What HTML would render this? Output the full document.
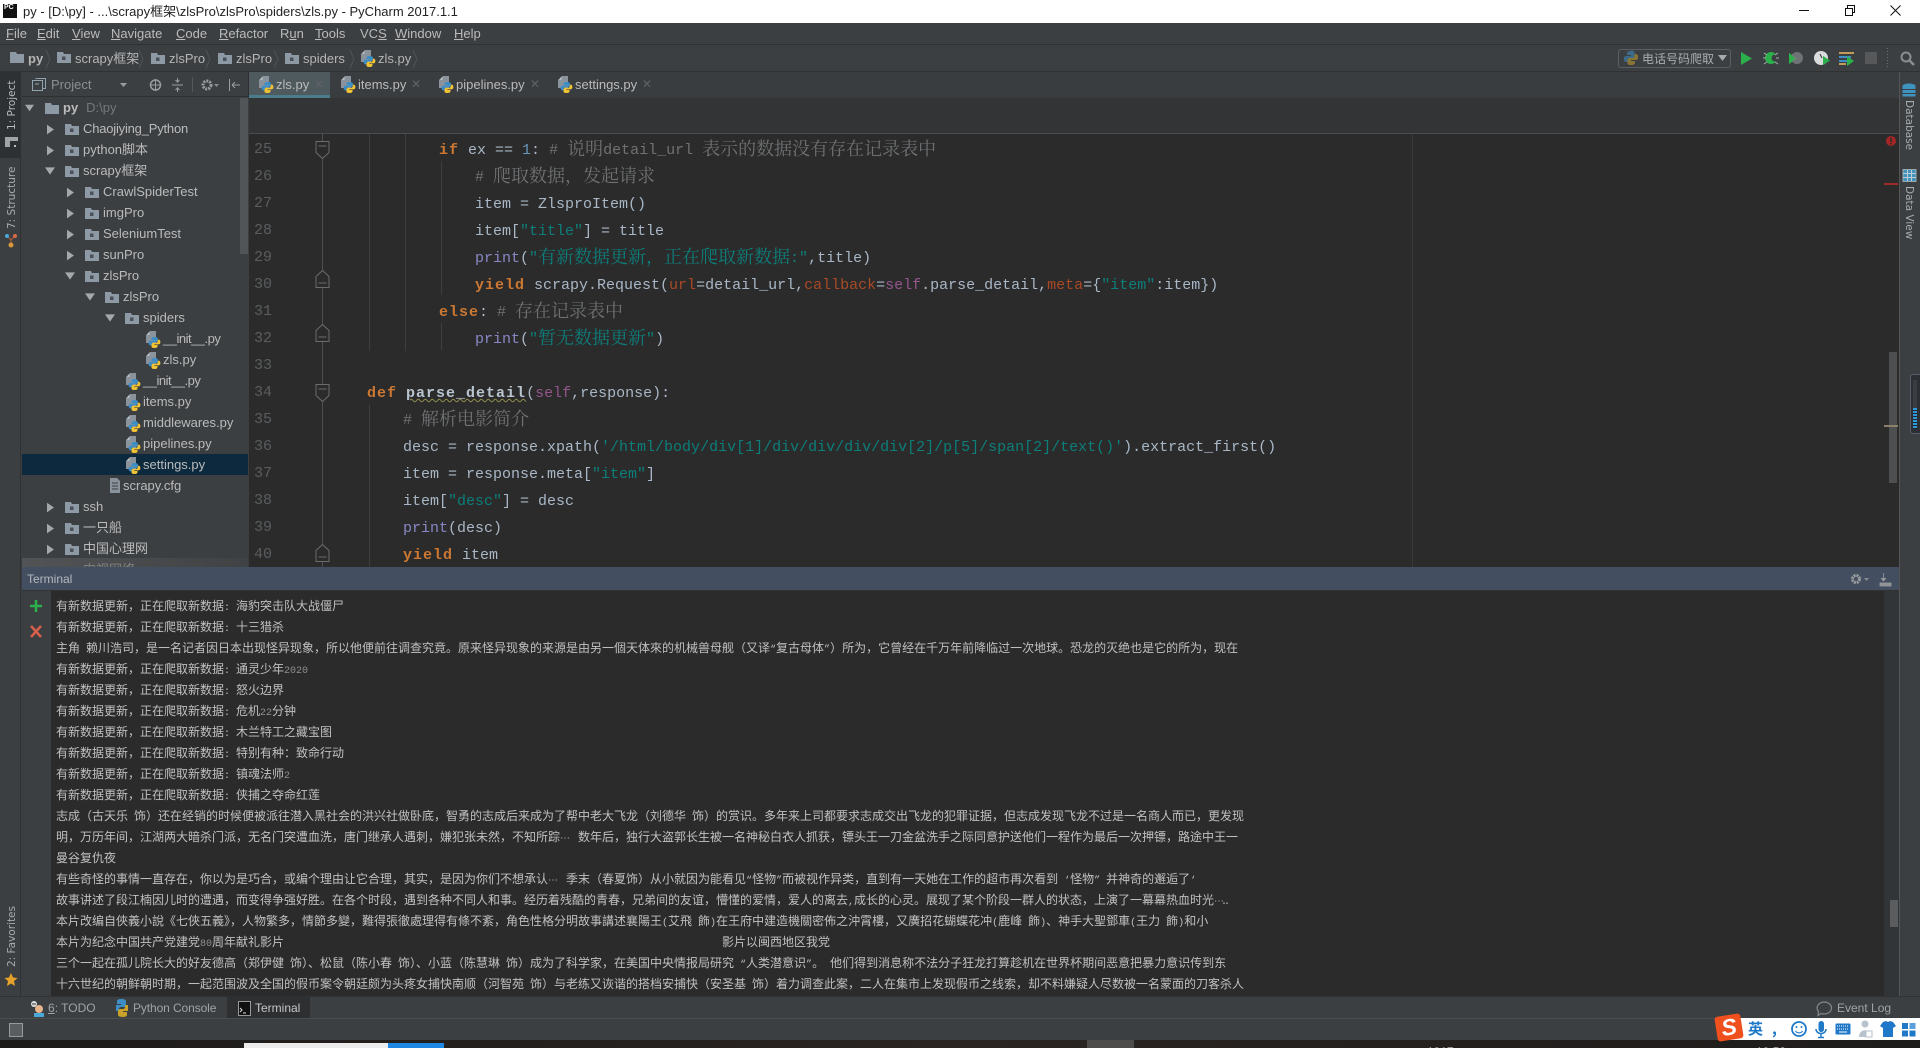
<!DOCTYPE html>
<html lang="zh"><head><meta charset="utf-8"><title>PyCharm</title>
<style>
html,body{margin:0;padding:0;background:#3c3f41;width:1920px;height:1048px;overflow:hidden}
body{position:relative;font-family:"Liberation Sans","Noto Sans CJK SC",sans-serif;font-size:13px;color:#bbb}
.a,.a *{box-sizing:border-box}
.a{position:absolute;white-space:nowrap}
#ov{position:absolute;left:0;top:0;z-index:5;pointer-events:none}
.m{top:23px;height:21px;line-height:22px;color:#bbb;font-size:13px}
.m u{text-decoration:underline}
.n{top:48px;line-height:22px;font-size:13px;color:#b5b5b5}
.tab{top:72px;line-height:25px;font-size:13px;color:#bbb}
.x{top:72px;line-height:24px;font-size:12px;color:#5f6264}
.r{height:21px;line-height:21px;font-size:13px;color:#bbb}
.ln{left:254px;width:24px;height:27px;margin-top:1px;font:15px/27px "Liberation Mono",monospace;color:#5a5d5f}
.c{height:27px;margin-top:2px;margin-left:-1px;font:15px/27px "Liberation Mono","Noto Serif CJK SC",monospace;color:#a9b7c6}
.c .z{font-size:18px;font-family:"Noto Serif CJK SC","Noto Sans CJK SC",serif;line-height:20px;position:relative;top:1px}
.k{color:#cc7832;font-weight:bold;letter-spacing:1px}.d{color:#6f7173}.s{color:#0c7f7b}.p{color:#8888c6}.f{color:#94558d}.q{color:#aa4926}.u{color:#6897bb}
.t{left:56px;height:21px;line-height:21px;font-size:12px;color:#c0c0c0;font-family:"WenQuanYi Zen Hei","Noto Sans CJK SC",sans-serif}
.t b{display:inline-block;width:12px;font:10px "Liberation Mono",monospace;color:#c0c0c0}
.t i{font:10px "Liberation Mono",monospace;color:#8f8f8f}
.t s{text-decoration:none;font:10px "Liberation Mono",monospace;color:#c0c0c0}
.v{font:10.5px/14px "DejaVu Sans",sans-serif;color:#a8adb0;writing-mode:vertical-rl}
.vl{transform:rotate(180deg)}
.g{top:997px;line-height:22px;font-size:12px;color:#a0a3a5}
.sg{top:1018px;height:22px;line-height:22px;color:#1f78c8;font-weight:bold;font-size:15px;font-family:"Noto Sans CJK SC",sans-serif}
</style></head>
<body>
<!-- title bar -->
<div class="a" style="left:0;top:0;width:1920px;height:23px;background:#fff"></div>
<div class="a" style="left:3px;top:4px;width:14px;height:14px;background:#111;color:#fff;font:bold 7px/8px 'Liberation Sans',sans-serif;padding-left:1px">PC</div>
<div class="a" style="left:23px;top:0;line-height:24px;font-size:13px;color:#222">py - [D:\py] - ...\scrapy框架\zlsPro\zlsPro\spiders\zls.py - PyCharm 2017.1.1</div>
<!-- menu -->
<div class="a" style="left:0;top:23px;width:1920px;height:22px;background:#3c3f41;border-bottom:1px solid #2f3132"></div>
<div class="a m" style="left:6px"><u>F</u>ile</div>
<div class="a m" style="left:37px"><u>E</u>dit</div>
<div class="a m" style="left:72px"><u>V</u>iew</div>
<div class="a m" style="left:111px"><u>N</u>avigate</div>
<div class="a m" style="left:176px"><u>C</u>ode</div>
<div class="a m" style="left:219px"><u>R</u>efactor</div>
<div class="a m" style="left:280px">R<u>u</u>n</div>
<div class="a m" style="left:315px"><u>T</u>ools</div>
<div class="a m" style="left:360px">VC<u>S</u></div>
<div class="a m" style="left:395px"><u>W</u>indow</div>
<div class="a m" style="left:454px"><u>H</u>elp</div>
<!-- nav -->
<div class="a" style="left:0;top:45px;width:1920px;height:27px;background:#3c3f41;border-bottom:1px solid #2f3132"></div>
<div class="a n" style="left:28px;font-weight:bold">py</div>
<div class="a n" style="left:75px">scrapy框架</div>
<div class="a n" style="left:169px">zlsPro</div>
<div class="a n" style="left:236px">zlsPro</div>
<div class="a n" style="left:303px">spiders</div>
<div class="a n" style="left:378px">zls.py</div>
<div class="a" style="left:1618px;top:49px;width:113px;height:19px;border:1px solid #5c5f61;border-radius:3px"></div>
<div class="a" style="left:1642px;top:48px;line-height:21px;font-size:12px;color:#a9adb0;font-family:'Noto Sans CJK SC',sans-serif">电话号码爬取</div>
<!-- left bar -->
<div class="a" style="left:0;top:72px;width:21px;height:924px;background:#3c3f41;border-right:1px solid #2f3132"></div>
<div class="a" style="left:0;top:72px;width:21px;height:86px;background:#2e3133"></div>
<div class="a v vl" style="left:5px;top:80px;height:50px;color:#b8bbbd">1: Project</div>
<div class="a v vl" style="left:5px;top:169px;height:60px">7: Structure</div>
<div class="a v vl" style="left:5px;top:907px;height:60px">2: Favorites</div>
<!-- project panel -->
<div class="a" style="left:22px;top:72px;width:226px;height:25px;background:#3c3f41;border-bottom:1px solid #2e3032"></div>
<div class="a" style="left:51px;top:72px;line-height:25px;color:#8c8f91;font-size:13px">Project</div>
<div class="a" id="tree" style="left:22px;top:97px;width:226px;height:470px;background:#3c3f41;overflow:hidden">
<div class="a" style="left:0;top:357px;width:226px;height:21px;background:#0d293e"></div>
<div class="a r" style="left:41px;top:0;font-weight:bold">py<span style="font-weight:normal;color:#75787a;margin-left:8px">D:\py</span></div>
<div class="a r" style="left:61px;top:21px;letter-spacing:-.2px">Chaojiying_Python</div>
<div class="a r" style="left:61px;top:42px">python脚本</div>
<div class="a r" style="left:61px;top:63px">scrapy框架</div>
<div class="a r" style="left:81px;top:84px">CrawlSpiderTest</div>
<div class="a r" style="left:81px;top:105px">imgPro</div>
<div class="a r" style="left:81px;top:126px">SeleniumTest</div>
<div class="a r" style="left:81px;top:147px">sunPro</div>
<div class="a r" style="left:81px;top:168px">zlsPro</div>
<div class="a r" style="left:101px;top:189px">zlsPro</div>
<div class="a r" style="left:121px;top:210px">spiders</div>
<div class="a r" style="left:141px;top:231px;letter-spacing:-.5px">__init__.py</div>
<div class="a r" style="left:141px;top:252px">zls.py</div>
<div class="a r" style="left:121px;top:273px;letter-spacing:-.5px">__init__.py</div>
<div class="a r" style="left:121px;top:294px">items.py</div>
<div class="a r" style="left:121px;top:315px">middlewares.py</div>
<div class="a r" style="left:121px;top:336px">pipelines.py</div>
<div class="a r" style="left:121px;top:357px">settings.py</div>
<div class="a r" style="left:101px;top:378px">scrapy.cfg</div>
<div class="a r" style="left:61px;top:399px">ssh</div>
<div class="a r" style="left:61px;top:420px">一只船</div>
<div class="a r" style="left:61px;top:441px">中国心理网</div>
<div class="a r" style="left:61px;top:462px">中视网络</div>
<div class="a" style="left:0;top:461px;width:226px;height:9px;background:linear-gradient(90deg,rgba(90,92,94,.7),rgba(70,72,74,.4))"></div>
<div class="a" style="left:218px;top:1px;width:8px;height:156px;background:#525557"></div>
</div>
<!-- tabs -->
<div class="a" style="left:248px;top:72px;width:1651px;height:26px;background:#3a3d3f;border-left:1px solid #2e3032"></div>
<div class="a" style="left:249px;top:72px;width:81px;height:26px;background:#4e5a5e;border-bottom:3px solid #4a7c8c"></div>
<div class="a" style="left:249px;top:98px;width:1650px;height:35px;background:#323436"></div>
<div class="a tab" style="left:276px">zls.py</div><div class="a x" style="left:314px">✕</div>
<div class="a tab" style="left:358px">items.py</div><div class="a x" style="left:411px">✕</div>
<div class="a tab" style="left:456px">pipelines.py</div><div class="a x" style="left:530px">✕</div>
<div class="a tab" style="left:575px">settings.py</div><div class="a x" style="left:642px">✕</div>
<!-- editor -->
<div class="a" style="left:249px;top:133px;width:1650px;height:434px;background:#2b2b2b;border-top:1px solid #4a4c4d"></div>
<div class="a" style="left:1412px;top:134px;width:1px;height:433px;background:#3a3a3a"></div>
<div class="a" style="left:1889px;top:352px;width:8px;height:131px;background:#4e4f50"></div>
<div class="a" style="left:1884px;top:183px;width:14px;height:2px;background:#9e2a2a"></div>
<div class="a" style="left:1884px;top:425px;width:14px;height:2px;background:#8a7f68"></div>
<div class="a ln" style="top:135px">25</div><div class="a ln" style="top:162px">26</div><div class="a ln" style="top:189px">27</div><div class="a ln" style="top:216px">28</div><div class="a ln" style="top:243px">29</div><div class="a ln" style="top:270px">30</div><div class="a ln" style="top:297px">31</div><div class="a ln" style="top:324px">32</div><div class="a ln" style="top:351px">33</div><div class="a ln" style="top:378px">34</div><div class="a ln" style="top:405px">35</div><div class="a ln" style="top:432px">36</div><div class="a ln" style="top:459px">37</div><div class="a ln" style="top:486px">38</div><div class="a ln" style="top:513px">39</div><div class="a ln" style="top:540px">40</div>
<div class="a c" style="left:440px;top:135px"><span class="k">if</span> ex == <span class="u">1</span>: <span class="d"># <span class="z">说明</span>detail_url <span class="z">表示的数据没有存在记录表中</span></span></div>
<div class="a c" style="left:476px;top:162px"><span class="d"># <span class="z">爬取数据，发起请求</span></span></div>
<div class="a c" style="left:476px;top:189px">item = ZlsproItem()</div>
<div class="a c" style="left:476px;top:216px">item[<span class="s">"title"</span>] = title</div>
<div class="a c" style="left:476px;top:243px"><span class="p">print</span>(<span class="s">"<span class="z">有新数据更新，正在爬取新数据</span>:"</span>,title)</div>
<div class="a c" style="left:476px;top:270px"><span class="k">yield</span> scrapy.Request(<span class="q">url</span>=detail_url,<span class="q">callback</span>=<span class="f">self</span>.parse_detail,<span class="q">meta</span>={<span class="s">"item"</span>:item})</div>
<div class="a c" style="left:440px;top:297px"><span class="k">else</span>: <span class="d"># <span class="z">存在记录表中</span></span></div>
<div class="a c" style="left:476px;top:324px"><span class="p">print</span>(<span class="s">"<span class="z">暂无数据更新</span>"</span>)</div>
<div class="a c" style="left:368px;top:378px"><span class="k">def</span> <span style="color:#b8c4ce;font-weight:bold;letter-spacing:1px;text-decoration:underline wavy #8f8f4e 1px">parse_detail</span>(<span class="f">self</span>,response):</div>
<div class="a c" style="left:404px;top:405px"><span class="d"># <span class="z">解析电影简介</span></span></div>
<div class="a c" style="left:404px;top:432px">desc = response.xpath(<span class="s">'/html/body/div[1]/div/div/div/div[2]/p[5]/span[2]/text()'</span>).extract_first()</div>
<div class="a c" style="left:404px;top:459px">item = response.meta[<span class="s">"item"</span>]</div>
<div class="a c" style="left:404px;top:486px">item[<span class="s">"desc"</span>] = desc</div>
<div class="a c" style="left:404px;top:513px"><span class="p">print</span>(desc)</div>
<div class="a c" style="left:404px;top:540px"><span class="k">yield</span> item</div>
<!-- terminal -->
<div class="a" style="left:22px;top:567px;width:1877px;height:24px;background:#434e60;border-bottom:1px solid #333"></div>
<div class="a" style="left:27px;top:567px;line-height:24px;font-size:12px;color:#b4b8bd">Terminal</div>
<div class="a" style="left:22px;top:591px;width:29px;height:405px;background:#3c3f41"></div>
<div class="a" style="left:51px;top:591px;width:1833px;height:405px;background:#2b2b2b"></div>
<div class="a" style="left:1884px;top:591px;width:15px;height:405px;background:#323537"></div>
<div class="a" style="left:1890px;top:900px;width:8px;height:27px;background:#5a5c5e"></div>
<div class="a t" style="top:595px">有新数据更新，正在爬取新数据<b>:</b>海豹突击队大战僵尸</div>
<div class="a t" style="top:616px">有新数据更新，正在爬取新数据<b>:</b>十三猎杀</div>
<div class="a t" style="top:637px">主角&ensp;赖川浩司，是一名记者因日本出现怪异现象，所以他便前往调查究竟。原来怪异现象的来源是由另一個天体來的机械兽母舰（又译<s>“</s>复古母体<s>”</s>）所为，它曾经在千万年前降临过一次地球。恐龙的灭绝也是它的所为，现在</div>
<div class="a t" style="top:658px">有新数据更新，正在爬取新数据<b>:</b>通灵少年<i>2020</i></div>
<div class="a t" style="top:679px">有新数据更新，正在爬取新数据<b>:</b>怒火边界</div>
<div class="a t" style="top:700px">有新数据更新，正在爬取新数据<b>:</b>危机<i>22</i>分钟</div>
<div class="a t" style="top:721px">有新数据更新，正在爬取新数据<b>:</b>木兰特工之藏宝图</div>
<div class="a t" style="top:742px">有新数据更新，正在爬取新数据<b>:</b>特别有种：致命行动</div>
<div class="a t" style="top:763px">有新数据更新，正在爬取新数据<b>:</b>镇魂法师<i>2</i></div>
<div class="a t" style="top:784px">有新数据更新，正在爬取新数据<b>:</b>侠捕之夺命红莲</div>
<div class="a t" style="top:805px">志成（古天乐&ensp;饰）还在经销的时候便被派往潜入黑社会的洪兴社做卧底，智勇的志成后来成为了帮中老大飞龙（刘德华&ensp;饰）的赏识。多年来上司都要求志成交出飞龙的犯罪证据，但志成发现飞龙不过是一名商人而已，更发现</div>
<div class="a t" style="top:826px">明，万历年间，江湖两大暗杀门派，无名门突遭血洗，唐门继承人遇刺，嫌犯张未然，不知所踪<b>⋯</b><s> </s>数年后，独行大盗郭长生被一名神秘白衣人抓获，镖头王一刀金盆洗手之际同意护送他们一程作为最后一次押镖，路途中王一</div>
<div class="a t" style="top:847px">曼谷复仇夜</div>
<div class="a t" style="top:868px">有些奇怪的事情一直存在，你以为是巧合，或编个理由让它合理，其实，是因为你们不想承认<b>⋯</b><s> </s>季末（春夏饰）从小就因为能看见<s>“</s>怪物<s>”</s>而被视作异类，直到有一天她在工作的超市再次看到<s> ‘</s>怪物<s>” </s>并神奇的邂逅了<s>‘</s></div>
<div class="a t" style="top:889px">故事讲述了段江楠因儿时的遭遇，而变得争强好胜。在各个时段，遇到各种不同人和事。经历着残酷的青春，兄弟间的友谊，懵懂的爱情，爱人的离去<s>,</s>成长的心灵。展现了某个阶段一群人的状态，上演了一幕幕热血时光<b style="width:7px">⋯</b><b style="width:3px">.</b><b style="width:3px">.</b></div>
<div class="a t" style="top:910px">本片改编自俠義小說《七俠五義》，人物繁多，情節多變，難得張徹處理得有條不紊，角色性格分明故事講述襄陽王<s>(</s>艾飛&ensp;飾<s>)</s>在王府中建造機關密佈之沖霄樓，又廣招花蝴蝶花冲<s>(</s>鹿峰&ensp;飾<s>)</s>、神手大聖鄧車<s>(</s>王力&ensp;飾<s>)</s>和小</div>
<div class="a t" style="top:931px">本片为纪念中国共产党建党<i>80</i>周年献礼影片</div>
<div class="a t" style="top:931px;left:722px">影片以闽西地区我党</div>
<div class="a t" style="top:952px">三个一起在孤儿院长大的好友德高（郑伊健&ensp;饰）、松鼠（陈小春&ensp;饰）、小蓝（陈慧琳&ensp;饰）成为了科学家，在美国中央情报局研究<s> “</s>人类潜意识<s>”</s>。<s> </s>他们得到消息称不法分子狂龙打算趁机在世界杯期间恶意把暴力意识传到东</div>
<div class="a t" style="top:973px">十六世纪的朝鲜朝时期，一起范围波及全国的假币案令朝廷颇为头疼女捕快南顺（河智苑&ensp;饰）与老练又诙谐的搭档安捕快（安圣基&ensp;饰）着力调查此案，二人在集市上发现假币之线索，却不料嫌疑人尽数被一名蒙面的刀客杀人</div>
<!-- right bar -->
<div class="a" style="left:1899px;top:72px;width:21px;height:924px;background:#3c3f41;border-left:1px solid #555"></div>
<div class="a v" style="left:1902px;top:100px">Database</div>
<div class="a v" style="left:1902px;top:186px">Data View</div>
<div class="a" style="left:1910px;top:374px;width:12px;height:60px;background:#2c2f33;border:1px solid #555e66;border-radius:3px 0 0 3px"></div>
<div class="a" style="left:1913px;top:380px;width:4px;height:28px;background:#3a3d42"></div>
<div class="a" style="left:1913px;top:408px;width:4px;height:21px;background:repeating-linear-gradient(#2e9bd6 0 2px,#223 2px 3px)"></div>
<!-- bottom tool tabs -->
<div class="a" style="left:0;top:996px;width:1920px;height:23px;background:#3c3f41;border-top:1px solid #2f3132;border-bottom:1px solid #4a4c4e"></div>
<div class="a" style="left:227px;top:997px;width:83px;height:21px;background:#2d2f30"></div>
<div class="a g" style="left:48px"><u>6</u>: TODO</div>
<div class="a g" style="left:133px;letter-spacing:-.1px">Python Console</div>
<div class="a g" style="left:255px;color:#c5c7c8">Terminal</div>
<div class="a g" style="left:1837px">Event Log</div>
<!-- status -->
<div class="a" style="left:0;top:1019px;width:1920px;height:21px;background:#3c3f41"></div>
<div class="a" style="left:9px;top:1023px;width:14px;height:14px;background:#5b5e60;border:1px solid #999"></div>
<!-- taskbar -->
<div class="a" style="left:0;top:1040px;width:1920px;height:8px;background:linear-gradient(90deg,#1d1b1a,#2a2522 50%,#1e1c1b);overflow:hidden">
<div class="a" style="left:244px;top:3px;width:144px;height:5px;background:#ececec"></div>
<div class="a" style="left:388px;top:3px;width:56px;height:5px;background:#1e88e5"></div>
<div class="a" style="left:1087px;top:0;width:47px;height:8px;background:#4d4c4a"></div>
<div class="a" style="left:1427px;top:5px;font-size:12px;color:#fff">1917</div>
<div class="a" style="left:1756px;top:5px;font-size:12px;color:#fff">10:58</div>
</div>
<!-- sogou bar -->
<div class="a" style="left:1730px;top:1018px;width:190px;height:22px;background:#fff"></div>
<div class="a" style="left:1716px;top:1015px;width:26px;height:25px;background:#f0501e;border-radius:3px;transform:rotate(-9deg);z-index:6;color:#fff;font:italic bold 23px/25px 'Liberation Sans',sans-serif;text-align:center">S</div>
<div class="a sg" style="left:1748px">英</div>
<div class="a sg" style="left:1772px">,</div>

<svg id="ov" width="1920" height="1048" viewBox="0 0 1920 1048" xmlns="http://www.w3.org/2000/svg">
<defs>
<symbol id="pf" viewBox="0 0 14 17" overflow="visible">
<path d="M4 0h6v12H0V4z" fill="#8a939b"/><path d="M3.500 .8v3H.8z" fill="#c2c8cc"/>
<path d="M8.500 6c-2 0-3 .7-3 1.800v1.200h3.200v.6H4.600c-1.200 0-2 1-2 2.400s.8 2.400 2 2.400h1v-1.500c0-1 .9-1.800 2-1.800h2.600c1 0 1.700-.8 1.700-1.700V7.800C11.900 6.700 10.700 6 8.500 6z" fill="#3d8ec6"/>
<path d="M8.500 17c2 0 3-.7 3-1.800V14H8.300v-.6h4.100c1.200 0 2-1 2-2.400s-.8-2.400-2-2.400h-.6v1.500c0 1-.9 1.800-2 1.800H7.200c-1 0-1.700.8-1.700 1.700v1.600C5.500 16.300 6.300 17 8.500 17z" fill="#f2c434"/>
</symbol>
<symbol id="fd" viewBox="0 0 14 11"><path d="M0 0h6l1 2h7v9H0z" fill="#8d99a5"/><rect x="5" y="4.500" width="3.500" height="3.500" fill="#4b5159"/></symbol>
<symbol id="fe" viewBox="0 0 14 11"><path d="M0 0h6l1 2h7v9H0z" fill="#8d99a5"/></symbol>
<symbol id="tr" viewBox="0 0 8 11"><path d="M0 0l8 5.500-8 5.500z" fill="#a4a8ab"/></symbol>
<symbol id="td" viewBox="0 0 11 8"><path d="M0 0h11l-5.500 8z" fill="#a4a8ab"/></symbol>
<symbol id="ft" viewBox="0 0 14 18"><path d="M.5.500h13v11l-6.500 6-6.500-6z" fill="#2b2b2b" stroke="#6a6c6e"/><path d="M3 5h8" stroke="#6a6c6e"/></symbol>
<symbol id="fb" viewBox="0 0 14 18"><path d="M.5 17.500h13v-11l-6.500-6-6.500 6z" fill="#2b2b2b" stroke="#6a6c6e"/><path d="M3 13h8" stroke="#6a6c6e"/></symbol>
</defs>
<!-- nav icons -->
<use href="#fe" x="10" y="52" width="14" height="11"/>
<use href="#fd" x="57" y="52" width="14" height="11"/>
<use href="#fd" x="151" y="53" width="14" height="11"/>
<use href="#fd" x="218" y="53" width="14" height="11"/>
<use href="#fd" x="285" y="53" width="14" height="11"/>
<use href="#pf" x="361" y="50" width="14" height="17"/>
<g fill="none" stroke="#505355"><path d="M46 50l4 9-4 9M139 50l4 9-4 9M206 50l4 9-4 9M274 50l4 9-4 9M350 50l4 9-4 9M413 50l4 9-4 9"/></g>
<!-- run toolbar -->
<g opacity=".55"><path d="M1631 51c-3 0-4 1-4 2.500v1.500h4v1h-5c-1.500 0-2 1-2 3s.6 3 2 3h1.500v-2c0-1.200 1-2 2-2h3c1 0 2-.8 2-2v-3c0-1.500-1-2.500-3.500-2.500z" fill="#3d8ec6"/><path d="M1631 65c3 0 4-1 4-2.500V61h-4v-1h5c1.500 0 2-1 2-3s-.6-3-2-3h-1.500v2c0 1.200-1 2-2 2h-3c-1 0-2 .8-2 2v3c0 1.500 1 2 3.500 2z" fill="#c9a22a"/></g>
<path d="M1718 55h9l-4.500 6z" fill="#a8abad"/>
<path d="M1741 52l11 6.500-11 6.500z" fill="#2cb04b"/>
<g transform="translate(1771,58)"><ellipse rx="6" ry="6" fill="#2cb04b"/><circle cx="4" r="3.500" fill="#3c3f41"/><path d="M-7-5l3 2M7-5l-3 2M-8 0h3M8 0h-3M-7 6l3-2M7 6l-3-2" stroke="#a9adb0"/></g>
<path d="M1789 53l8 5.500-8 5.500z" fill="#2cb04b"/><circle cx="1797" cy="58" r="6" fill="#7c7f81" opacity=".8"/><path d="M1789 53l6 5.500-6 5.500z" fill="#2cb04b"/>
<circle cx="1821" cy="58" r="7" fill="#d9dbdc"/><path d="M1820 54l2 4" stroke="#333"/><path d="M1823 56l7 4.500-7 4.500z" fill="#2cb04b"/>
<g><rect x="1839" y="52" width="15" height="2" fill="#c49a5c"/><rect x="1839" y="56" width="12" height="2" fill="#3f8fc4"/><rect x="1839" y="60" width="8" height="2" fill="#3f8fc4"/><rect x="1839" y="63" width="7" height="2" fill="#c49a5c"/><path d="M1847 56l7 5-7 5z" fill="#2cb04b"/></g>
<rect x="1865" y="52" width="12" height="12" fill="#565859"/>
<path d="M1887.500 48v20" stroke="#6a6c6e" stroke-dasharray="1 2"/>
<circle cx="1906" cy="57" r="4.500" fill="none" stroke="#8a8d8f" stroke-width="2"/><path d="M1909 60l5 5" stroke="#8a8d8f" stroke-width="2.500"/>
<!-- window buttons -->
<path d="M1799 10.500h10" stroke="#111"/>
<path d="M1845.500 8.500h7v7h-7zM1847.500 8V5.500h7v7h-2" fill="none" stroke="#111"/>
<path d="M1890.500 5.500l10 10M1900.500 5.500l-10 10" stroke="#111"/>
<!-- project toolbar -->
<path d="M32.500 80.500h10v10h-10zM35.500 78.500h10v10h-3M35 84h4" fill="none" stroke="#8fa3b0"/>
<path d="M120 83h7l-3.500 4z" fill="#9a9d9f"/>
<circle cx="155.500" cy="85" r="5" fill="none" stroke="#9a9d9f" stroke-width="1.500"/><path d="M155.500 79v12M150 85h11" stroke="#9a9d9f"/>
<path d="M172 85h11M177.500 78v4l-2-2M177.500 82l2-2M177.500 92v-4l-2 2M177.500 88l2 2" fill="none" stroke="#9a9d9f"/>
<path d="M192.500 77v15" stroke="#55585a"/>
<circle cx="207" cy="85" r="4" fill="none" stroke="#9a9d9f" stroke-width="3" stroke-dasharray="2 1"/><path d="M214 84h5l-2.500 3z" fill="#8a8d8f"/>
<path d="M229.500 79v12M232 85h8M232 85l3-3M232 85l3 3" fill="none" stroke="#9a9d9f"/>
<!-- left bar icons -->
<path d="M5 137h13v4h-8v6H5z" fill="#a0a4a7"/><rect x="14" y="145" width="2" height="2" fill="#bbb"/>
<g fill="none" stroke="#b85e3a"><path d="M7 236l4 4M15 236l-4 4M11 240v4"/></g><circle cx="7" cy="236" r="2" fill="#4aa8d8"/><circle cx="15" cy="236" r="2" fill="#d86a4a"/><circle cx="11" cy="245" r="2.500" fill="#d9973a"/>
<path d="M11 973l2 4.500 4.500.5-3.500 3 1 5-4-2.500-4 2.500 1-5-3.500-3 4.500-.5z" fill="#e6a32c"/>
<!-- right bar icons -->
<g fill="#3f93bf"><ellipse cx="1909" cy="86" rx="6.500" ry="2.500"/><rect x="1902.500" y="86" width="13" height="3"/><rect x="1902.500" y="90" width="13" height="3"/><rect x="1902.500" y="94" width="13" height="2.500"/></g>
<rect x="1903" y="169.500" width="13" height="12" fill="#3f93bf" stroke="#9aa" stroke-width="1"/><path d="M1907.500 170v11M1911.500 170v11M1903 173.500h13M1903 177.500h13" stroke="#c3ccd2"/>
<!-- error -->
<circle cx="1891" cy="141" r="5" fill="#a52626"/><rect x="1890.300" y="137.500" width="1.500" height="4.500" fill="#2b2b2b"/><rect x="1890.300" y="143" width="1.500" height="1.500" fill="#2b2b2b"/>
<!-- tabs icons -->
<use href="#pf" x="259" y="76" width="14" height="17"/>
<use href="#pf" x="341" y="76" width="14" height="17"/>
<use href="#pf" x="439" y="76" width="14" height="17"/>
<use href="#pf" x="558" y="76" width="14" height="17"/>
<!-- tree icons -->
<use href="#td" x="25" y="104" width="9" height="8"/>
<use href="#fe" x="45" y="103" width="14" height="11"/>
<use href="#tr" x="47" y="124" width="7" height="11"/><use href="#fd" x="65" y="124" width="14" height="11"/>
<use href="#tr" x="47" y="145" width="7" height="11"/><use href="#fd" x="65" y="145" width="14" height="11"/>
<use href="#td" x="45" y="167" width="10" height="8"/><use href="#fd" x="65" y="166" width="14" height="11"/>
<use href="#tr" x="67" y="187" width="7" height="11"/><use href="#fd" x="85" y="187" width="14" height="11"/>
<use href="#tr" x="67" y="208" width="7" height="11"/><use href="#fd" x="85" y="208" width="14" height="11"/>
<use href="#tr" x="67" y="229" width="7" height="11"/><use href="#fd" x="85" y="229" width="14" height="11"/>
<use href="#tr" x="67" y="250" width="7" height="11"/><use href="#fd" x="85" y="250" width="14" height="11"/>
<use href="#td" x="65" y="272" width="10" height="8"/><use href="#fd" x="85" y="271" width="14" height="11"/>
<use href="#td" x="85" y="293" width="10" height="8"/><use href="#fd" x="105" y="292" width="14" height="11"/>
<use href="#td" x="105" y="314" width="10" height="8"/><use href="#fd" x="125" y="313" width="14" height="11"/>
<use href="#pf" x="146" y="331" width="14" height="17"/>
<use href="#pf" x="146" y="352" width="14" height="17"/>
<use href="#pf" x="126" y="373" width="14" height="17"/>
<use href="#pf" x="126" y="394" width="14" height="17"/>
<use href="#pf" x="126" y="415" width="14" height="17"/>
<use href="#pf" x="126" y="436" width="14" height="17"/>
<use href="#pf" x="126" y="457" width="14" height="17"/>
<path d="M110 478h7l3 3v12h-10z" fill="#8a939b"/><path d="M112 483h6M112 486h6M112 489h6" stroke="#3c3f41"/>
<use href="#tr" x="47" y="502" width="7" height="11"/><use href="#fd" x="65" y="502" width="14" height="11"/>
<use href="#tr" x="47" y="523" width="7" height="11"/><use href="#fd" x="65" y="523" width="14" height="11"/>
<use href="#tr" x="47" y="544" width="7" height="11"/><use href="#fd" x="65" y="544" width="14" height="11"/>
<!-- gutter -->
<path d="M322.500 134v433" stroke="#4d4f51"/>
<g stroke="#3d3f40"><path d="M369.500 134v217M405.500 134v217M441.500 161v134M441.500 323v27M369.500 405v162"/></g>
<use href="#ft" x="315" y="141" width="15" height="18"/>
<use href="#fb" x="315" y="270" width="15" height="18"/>
<use href="#fb" x="315" y="324" width="15" height="18"/>
<use href="#ft" x="315" y="384" width="15" height="18"/>
<use href="#fb" x="315" y="544" width="15" height="18"/>
<!-- terminal -->
<path d="M36 600v12M30 606h12" stroke="#2cb04b" stroke-width="2.500"/>
<path d="M31 626l10 11M41 626l-10 11" stroke="#d8604a" stroke-width="2.500"/>
<circle cx="1856" cy="579" r="3.500" fill="none" stroke="#9a9d9f" stroke-width="3" stroke-dasharray="2 .8"/><path d="M1864 578h5l-2.500 3z" fill="#8a8d8f"/>
<path d="M1883.500 573v7M1881 578l2.500 3 2.500-3M1880 583h11v3h-11z" fill="#8f9294" stroke="#9a9d9f" stroke-width=".8"/>
<!-- bottom tab icons -->
<circle cx="39" cy="1009" r="4" fill="#e8b48c"/><rect x="34" y="1013" width="10" height="4" fill="#4aa8d8"/><circle cx="34" cy="1004" r="3" fill="#ddd"/><rect x="32" y="1003.500" width="4" height="1" fill="#333"/>
<path d="M121 999c-3 0-4 1-4 2.500v2.500h4v1h-5v6h3v-2c0-1.200 1-2 2-2h3c1 0 2-.8 2-2v-3.500c0-1.500-1-2.500-5-2.500z" fill="#3d8ec6"/><path d="M123 1017c3 0 4-1 4-2.500V1012h-4v-1h5v-6h-3v2c0 1.200-1 2-2 2h-3c-1 0-2 .8-2 2v3.500c0 1.500 1 2.500 5 2.500z" fill="#c9a22a"/>
<rect x="238.500" y="1001.500" width="12" height="14" fill="#111" stroke="#999"/><path d="M240 1008l2 2-2 2M243 1013h3" stroke="#ddd" fill="none"/>
<path d="M1824 1002a7.500 6 0 1 1-3 11.500l-3 2 .5-4a7.500 6 0 0 1 5.500-9.500z" fill="none" stroke="#858789" stroke-width="1.200"/>
<!-- sogou icons -->
<circle cx="1799" cy="1029" r="7" fill="none" stroke="#1f78c8" stroke-width="1.800"/><circle cx="1796.500" cy="1027" r="1" fill="#1f78c8"/><circle cx="1801.500" cy="1027" r="1" fill="#1f78c8"/><path d="M1795.500 1031c1.500 2.500 5.500 2.500 7 0" fill="none" stroke="#1f78c8" stroke-width="1.200"/>
<rect x="1818.500" y="1021" width="5.500" height="11" rx="2.700" fill="#1f78c8"/><path d="M1816 1029c0 6 10 6 10 0M1821 1034v3M1818 1037.500h6" fill="none" stroke="#1f78c8" stroke-width="1.500"/>
<rect x="1835.500" y="1023.500" width="15" height="11" rx="1" fill="#1f78c8"/><path d="M1837 1026h12M1837 1029h12" stroke="#fff" stroke-dasharray="1 1"/><path d="M1839 1032h8" stroke="#fff"/>
<circle cx="1865" cy="1024" r="3.500" fill="#b8c2cc"/><path d="M1859 1037c0-9 12-9 12 0z" fill="#b8c2cc"/><rect x="1866" y="1031" width="6" height="6" fill="#fff" stroke="#b8c2cc"/>
<path d="M1883 1022l3-1 2 1 2-1 3 1 3 4-3 2v9h-10v-9l-3-2z" fill="#1f78c8"/>
<g fill="#1f78c8"><rect x="1902" y="1023" width="6" height="6"/><rect x="1909.500" y="1023" width="6" height="6" fill="#5aa0de"/><rect x="1902" y="1030.500" width="6" height="6"/><rect x="1909.500" y="1030.500" width="6" height="6"/></g>
</svg>
</body></html>
